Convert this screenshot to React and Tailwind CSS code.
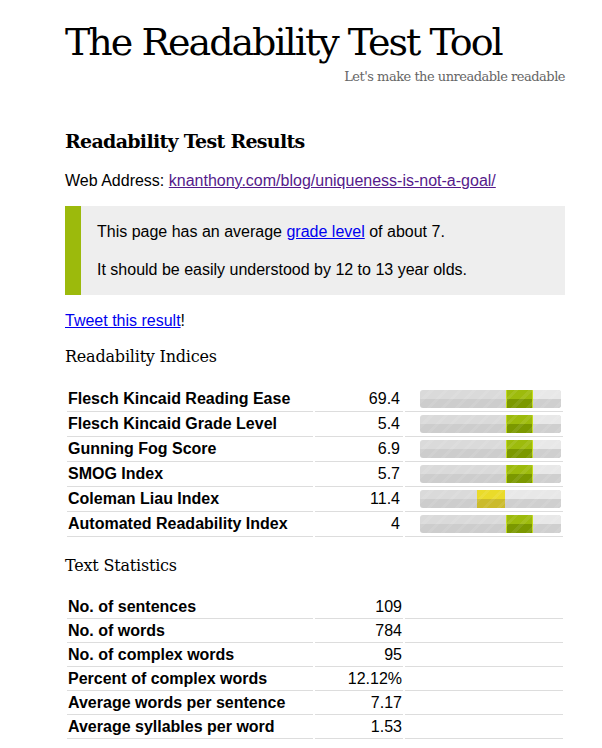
const indices = [
  { name: "Flesch Kincaid Reading Ease", value: "69.4", from: 86, to: 113, color: "green" },
  { name: "Flesch Kincaid Grade Level", value: "5.4", from: 86, to: 113, color: "green" },
  { name: "Gunning Fog Score", value: "6.9", from: 86, to: 113, color: "green" },
  { name: "SMOG Index", value: "5.7", from: 86, to: 113, color: "green" },
  { name: "Coleman Liau Index", value: "11.4", from: 57, to: 85, color: "yellow" },
  { name: "Automated Readability Index", value: "4", from: 86, to: 113, color: "green" },
];

const stats = [
  { name: "No. of sentences", value: "109" },
  { name: "No. of words", value: "784" },
  { name: "No. of complex words", value: "95" },
  { name: "Percent of complex words", value: "12.12%" },
  { name: "Average words per sentence", value: "7.17" },
  { name: "Average syllables per word", value: "1.53" },
];

const slab = { fontFamily: '"DejaVu Serif", serif' };

function Bar({ from, to, color }) {
  const fill =
    color === "green"
      ? "bg-[linear-gradient(to_bottom,#9dbb0c_0%,#9dbb0c_50%,#7b9800_50%,#7b9800_100%)] border-x border-[#c4dc1c]"
      : "bg-[linear-gradient(to_bottom,#eadb2a_0%,#eadb2a_50%,#cbbb2c_50%,#cbbb2c_100%)]";
  return (
    <div className="relative h-[18px] w-[141px] overflow-hidden rounded-[3px] bg-[linear-gradient(to_bottom,#dadada_0%,#dadada_50%,#cdcdcd_50%,#cdcdcd_100%)]">
      <div
        className="absolute top-0 bottom-0 right-0 bg-[linear-gradient(to_bottom,#e8e8e8_0%,#e8e8e8_50%,#cfcfcf_50%,#cfcfcf_100%)]"
        style={{ left: to }}
      />
      <div
        className={"absolute top-0 bottom-0 " + fill}
        style={{ left: from, width: to - from }}
      />
      <div className="absolute inset-0 bg-[repeating-linear-gradient(135deg,rgba(255,255,255,0)_0px,rgba(255,255,255,0)_7px,rgba(255,255,255,0.08)_7px,rgba(255,255,255,0.08)_10px)]" />
    </div>
  );
}

export default function App() {
  return (
    <div className="min-h-screen bg-white text-black" style={{ fontFamily: '"Liberation Sans", Arial, sans-serif' }}>
      <div className="ml-[65px] w-[500px]">
        <h1 className="pt-[20px] text-[38px] leading-[44px] tracking-[-2px]" style={slab}>
          The Readability Test Tool
        </h1>
        <p className="mt-[5px] text-right text-[13px] leading-[16px] text-[#666] tracking-[-0.5px]" style={slab}>
          Let's make the unreadable readable
        </p>

        <h2 className="mt-[44px] text-[19px] leading-[24px] font-bold tracking-[-0.7px]" style={slab}>
          Readability Test Results
        </h2>

        <p className="mt-[18px] text-[16px] leading-[20px]">
          Web Address:{" "}
          <a href="#" className="text-[#551a8b] underline">
            knanthony.com/blog/uniqueness-is-not-a-goal/
          </a>
        </p>

        <div className="mt-[15px] flex h-[89px] bg-[#eeeeee]">
          <div className="w-[16px] bg-[#9cba0c]" />
          <div className="flex flex-col pl-[16px] pt-[16px] text-[16px] leading-[20px]">
            <p>
              This page has an average{" "}
              <a href="#" className="text-[#0000ee] underline">
                grade level
              </a>{" "}
              of about 7.
            </p>
            <p className="mt-[18px]">It should be easily understood by 12 to 13 year olds.</p>
          </div>
        </div>

        <p className="mt-[16px] text-[16px] leading-[20px]">
          <a href="#" className="text-[#0000ee] underline">
            Tweet this result
          </a>
          !
        </p>

        <h3 className="mt-[16px] text-[16px] leading-[20px] tracking-[-0.2px]" style={slab}>
          Readability Indices
        </h3>

        <table className="mt-[20px] w-[500px] border-separate border-spacing-x-[2px] border-spacing-y-0 text-[16px] leading-[20px]">
          <tbody>
            {indices.map((r) => (
              <tr key={r.name}>
                <td className="h-[25px] w-[246px] border-b border-[#dddddd] py-0 pl-[1px] font-bold">{r.name}</td>
                <td className="w-[88px] border-b border-[#dddddd] py-0 pr-[3px] text-right">{r.value}</td>
                <td className="border-b border-[#dddddd] py-0">
                  <div className="flex justify-end pr-[2px]">
                    <Bar from={r.from} to={r.to} color={r.color} />
                  </div>
                </td>
              </tr>
            ))}
          </tbody>
        </table>

        <h3 className="mt-[19px] text-[16px] leading-[20px] tracking-[-0.2px]" style={slab}>
          Text Statistics
        </h3>

        <table className="mt-[19px] w-[500px] border-separate border-spacing-x-[2px] border-spacing-y-0 text-[16px] leading-[20px]">
          <tbody>
            {stats.map((r) => (
              <tr key={r.name}>
                <td className="h-[24px] w-[246px] border-b border-[#dddddd] py-0 pl-[1px] font-bold">{r.name}</td>
                <td className="w-[88px] border-b border-[#dddddd] py-0 pr-[1px] text-right">{r.value}</td>
                <td className="border-b border-[#dddddd] py-0" />
              </tr>
            ))}
          </tbody>
        </table>
      </div>
    </div>
  );
}
